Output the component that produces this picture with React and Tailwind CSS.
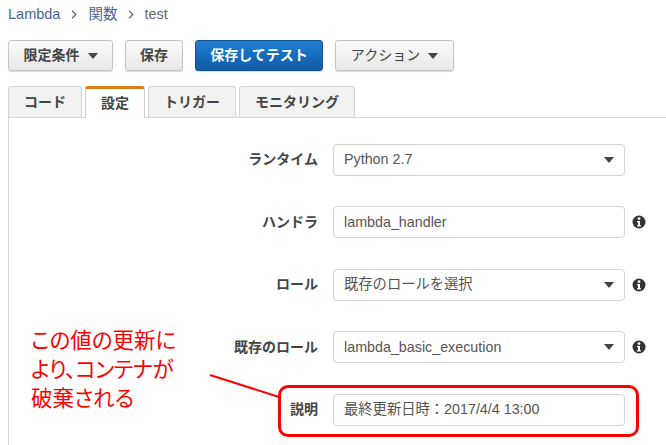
const Caret = ({ className = "" }) => (
  <span
    className={`inline-block w-0 h-0 border-l-[5px] border-r-[5px] border-t-[6px] border-l-transparent border-r-transparent border-t-[#444] ${className}`}
  />
);

const Chevron = ({ className = "" }) => (
  <svg width="6" height="9" viewBox="0 0 6 9" className={`shrink-0 ${className}`}>
    <path d="M1 .8 4.8 4.5 1 8.2" fill="none" stroke="#666" strokeWidth="1.2" />
  </svg>
);

const InfoIcon = () => (
  <svg width="14" height="14" viewBox="0 0 14 14" className="shrink-0">
    <circle cx="7" cy="7" r="6.5" fill="#333" />
    <circle cx="7" cy="3.6" r="1.4" fill="#fff" />
    <path d="M5 6h3v4.2h1v1.2H5v-1.2h1V7.2H5z" fill="#fff" />
  </svg>
);

const Button = ({ children, className = "" }) => (
  <button
    className={`h-[31px] flex items-center justify-center rounded-[3px] border border-[#c4c4c4] bg-gradient-to-b from-[#fafafa] to-[#e8e8e8] text-[#444] text-[14px] font-bold shadow-[0_1px_1px_rgba(0,0,0,0.15)] ${className}`}
  >
    {children}
  </button>
);

const Tab = ({ children, active, className = "" }) =>
  active ? (
    <div
      className={`relative z-10 h-[32px] -mb-px flex items-center justify-center bg-white border-x border-[#d0d0d0] border-t-[3px] border-t-[#dd7f11] rounded-t-[3px] text-[14px] font-bold text-[#444] ${className}`}
    >
      {children}
    </div>
  ) : (
    <div
      className={`h-[31px] flex items-center justify-center bg-[#f2f2f2] border border-b-0 border-[#d5d5d5] rounded-t-[3px] text-[14px] font-bold text-[#444] ${className}`}
    >
      {children}
    </div>
  );

const Field = ({ label, value, select, info }) => (
  <div className="flex items-center h-[32px]">
    <div className="w-[324px] pr-[15px] text-right text-[14px] font-bold text-[#444]">{label}</div>
    <div className="w-[292px] h-[32px] flex items-center justify-between pl-[10px] pr-[10px] border border-[#d5d5d5] rounded-[4px] bg-white text-[14.3px] text-[#555]">
      <span>{value}</span>
      {select && <Caret />}
    </div>
    {info && (
      <div className="ml-[7px]">
        <InfoIcon />
      </div>
    )}
  </div>
);

export default function App() {
  return (
    <div
      className="relative w-[666px] h-[445px] overflow-hidden bg-white"
      style={{ fontFamily: '"Liberation Sans", "Noto Sans CJK JP", sans-serif' }}
    >
      {/* breadcrumb */}
      <div className="flex items-center h-[29px] pl-2 text-[14.5px] text-[#666]">
        <span className="text-[#44659c]">Lambda</span>
        <Chevron className="mx-[11px]" />
        <span className="text-[#44659c]">関数</span>
        <Chevron className="ml-[11px] mr-[10px]" />
        <span>test</span>
      </div>

      {/* toolbar */}
      <div className="flex gap-3 pl-2 mt-[11px]">
        <Button className="w-[105px] gap-2">
          限定条件 <Caret />
        </Button>
        <Button className="w-[58px]">保存</Button>
        <Button className="w-[128px] !border-[#15508f] !from-[#1f7ed0] !to-[#0f5ba8] !text-white">
          保存してテスト
        </Button>
        <Button className="w-[119px] gap-2 !font-normal">
          アクション <Caret />
        </Button>
      </div>

      {/* tabs */}
      <div className="flex gap-[3px] pl-2 mt-[15px]">
        <Tab className="w-[74px]">コード</Tab>
        <Tab active className="w-[60px]">設定</Tab>
        <Tab className="w-[88px]">トリガー</Tab>
        <Tab className="w-[116px]">モニタリング</Tab>
      </div>

      {/* settings panel */}
      <div className="ml-2 h-[340px] border-l border-t border-[#d5d5d5] pt-[25.75px] flex flex-col gap-[30.5px]">
        <Field label="ランタイム" value="Python 2.7" select />
        <Field label="ハンドラ" value="lambda_handler" info />
        <Field label="ロール" value="既存のロールを選択" select info />
        <Field label="既存のロール" value="lambda_basic_execution" select info />
        <Field label="説明" value="最終更新日時：2017/4/4 13:00" />
      </div>

      {/* annotation */}
      <div className="absolute left-[31px] top-[327px] text-[21.5px] leading-[29px] text-[#ff0000] whitespace-nowrap [font-feature-settings:'palt']">
        この値の更新に
        <br />
        <span className="tracking-[-0.6px]">より、コンテナが</span>
        <br />
        破棄される
      </div>
      <svg className="absolute left-0 top-0 pointer-events-none" width="666" height="445">
        <line x1="210" y1="375" x2="279" y2="397" stroke="#ff0000" strokeWidth="2" />
      </svg>
      <div className="absolute left-[278px] top-[385px] w-[361px] h-[52px] border-[3px] border-[#ff0000] rounded-[10px]" />
    </div>
  );
}
